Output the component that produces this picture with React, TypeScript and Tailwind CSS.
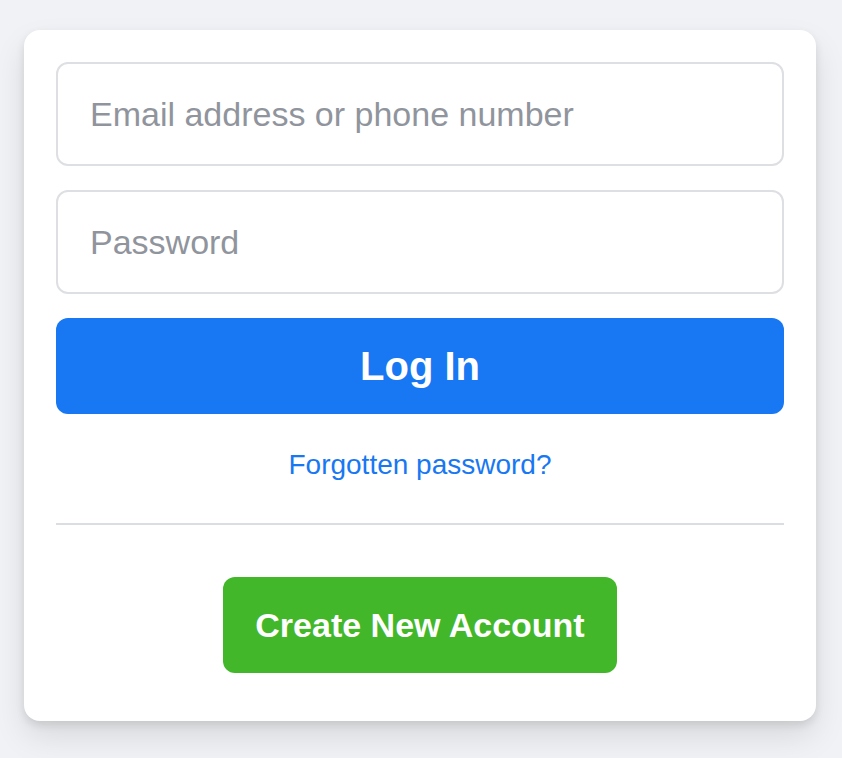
import React from "react";

export default function App() {
  return (
    <div
      className="min-h-[758px] w-[842px] bg-[#f0f2f5] pt-[30px] pl-[24px]"
      style={{ fontFamily: '"Liberation Sans", Arial, Helvetica, sans-serif' }}
    >
      <div className="w-[792px] rounded-[16px] bg-white px-[32px] pt-[32px] pb-[48px] shadow-[0_4px_8px_rgba(0,0,0,0.1),0_16px_32px_rgba(0,0,0,0.1)]">
        <input
          type="text"
          placeholder="Email address or phone number"
          className="block h-[104px] w-full rounded-[12px] border-2 border-[#dddfe2] bg-white px-[32px] text-[34px] text-[#1c1e21] outline-none placeholder:text-[#90949c]"
        />
        <input
          type="password"
          placeholder="Password"
          className="mt-[24px] block h-[104px] w-full rounded-[12px] border-2 border-[#dddfe2] bg-white px-[32px] text-[34px] text-[#1c1e21] outline-none placeholder:text-[#90949c]"
        />
        <button className="mt-[24px] flex h-[96px] w-full items-center justify-center rounded-[12px] bg-[#1877f2] text-[40px] font-bold text-white">
          Log In
        </button>
        <div className="mt-[31px] text-center text-[28px] leading-[40px] text-[#1877f2]">
          Forgotten password?
        </div>
        <div className="mt-[38px] h-[2px] w-full bg-[#dadde1]" />
        <div className="mt-[52px] flex justify-center">
          <button className="flex h-[96px] w-[394px] items-center justify-center rounded-[12px] bg-[#42b72a] text-[34px] font-bold text-white">
            Create New Account
          </button>
        </div>
      </div>
    </div>
  );
}
